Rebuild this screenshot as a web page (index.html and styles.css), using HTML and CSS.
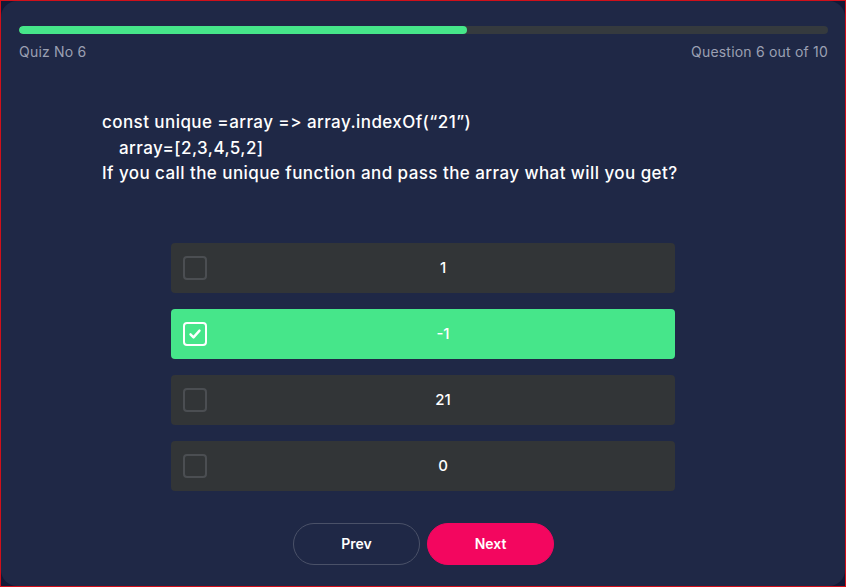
FILE: index.html
```html
<!DOCTYPE html>
<html>
<head>
<meta charset="utf-8">
<link rel="stylesheet" href="styles.css">
</head>
<body>
<div class="frame">
  <div class="card">
    <div class="progress"><div class="progress-fill" style="width:55.4%"></div></div>
    <div class="meta">
      <span>Quiz No 6</span>
      <span>Question 6 out of 10</span>
    </div>
    <div class="question">
      <div>const unique =array =&gt; array.indexOf(“21”)</div>
      <div class="indent">array=[2,3,4,5,2]</div>
      <div>If you call the unique function and pass the array what will you get?</div>
    </div>
    <div class="options">
      <div class="option"><span class="box"></span><span class="label">1</span></div>
      <div class="option selected"><span class="box"><svg viewBox="0 0 24 24" width="18" height="18"><path d="M6 12.5l4 4 8-9" fill="none" stroke="#fff" stroke-width="3.2" stroke-linecap="round" stroke-linejoin="round"/></svg></span><span class="label">-1</span></div>
      <div class="option"><span class="box"></span><span class="label">21</span></div>
      <div class="option"><span class="box"></span><span class="label">0</span></div>
    </div>
    <div class="actions">
      <button class="btn prev">Prev</button>
      <button class="btn next">Next</button>
    </div>
  </div>
</div>
</body>
</html>
```
FILE: styles.css
```css
html, body {
  margin: 0;
  padding: 0;
}
body {
  width: 846px;
  height: 587px;
  overflow: hidden;
  font-family: "Inter", "Noto Sans", sans-serif;
}
.frame {
  box-sizing: border-box;
  width: 846px;
  height: 587px;
  border: 1px solid #d0101a;
  background: #131937;
}
.card {
  box-sizing: border-box;
  height: 100%;
  background: #1f2846;
  border-radius: 16px;
  padding: 25px 17px 0 18px;
  display: flex;
  flex-direction: column;
}
.progress {
  height: 8px;
  border-radius: 4px;
  background: #353a3e;
  overflow: hidden;
}
.progress-fill {
  height: 100%;
  background: #46e68a;
  border-radius: 4px;
}
.meta {
  display: flex;
  justify-content: space-between;
  margin-top: 9px;
  font-size: 14px;
  color: #9ba0b3;
  line-height: 18px;
  letter-spacing: 0.2px;
}
.question {
  margin: 49px 0 0 83px;
  color: #ffffff;
  font-size: 17px;
  font-weight: 500;
  line-height: 25.5px;
  letter-spacing: 0.43px;
}
.question .indent {
  padding-left: 17px;
}
.options {
  margin: 56px 0 0 152px;
  width: 504px;
  display: flex;
  flex-direction: column;
  gap: 16px;
}
.option {
  height: 50px;
  border-radius: 4px;
  background: #323537;
  display: flex;
  align-items: center;
  padding: 0 0 0 12px;
}
.option.selected {
  background: #46e68a;
}
.box {
  box-sizing: border-box;
  width: 24px;
  height: 24px;
  border: 2px solid #4b4e52;
  border-radius: 4px;
  display: flex;
  align-items: center;
  justify-content: center;
  flex-shrink: 0;
}
.selected .box {
  border-color: #ffffff;
  border-width: 2.5px;
}
.label {
  flex: 1;
  text-align: center;
  color: #ffffff;
  font-size: 15px;
  font-weight: 500;
  padding-left: 4px;
}
.actions {
  margin-top: 32px;
  display: flex;
  justify-content: center;
  gap: 7px;
}
.btn {
  width: 127px;
  height: 42px;
  border-radius: 21px;
  font-family: "Inter", sans-serif;
  font-size: 14px;
  font-weight: 600;
  color: #ffffff;
  cursor: pointer;
}
.prev {
  background: transparent;
  border: 1px solid #4a5168;
}
.next {
  background: #f3065f;
  border: 1px solid #f3065f;
}
```
